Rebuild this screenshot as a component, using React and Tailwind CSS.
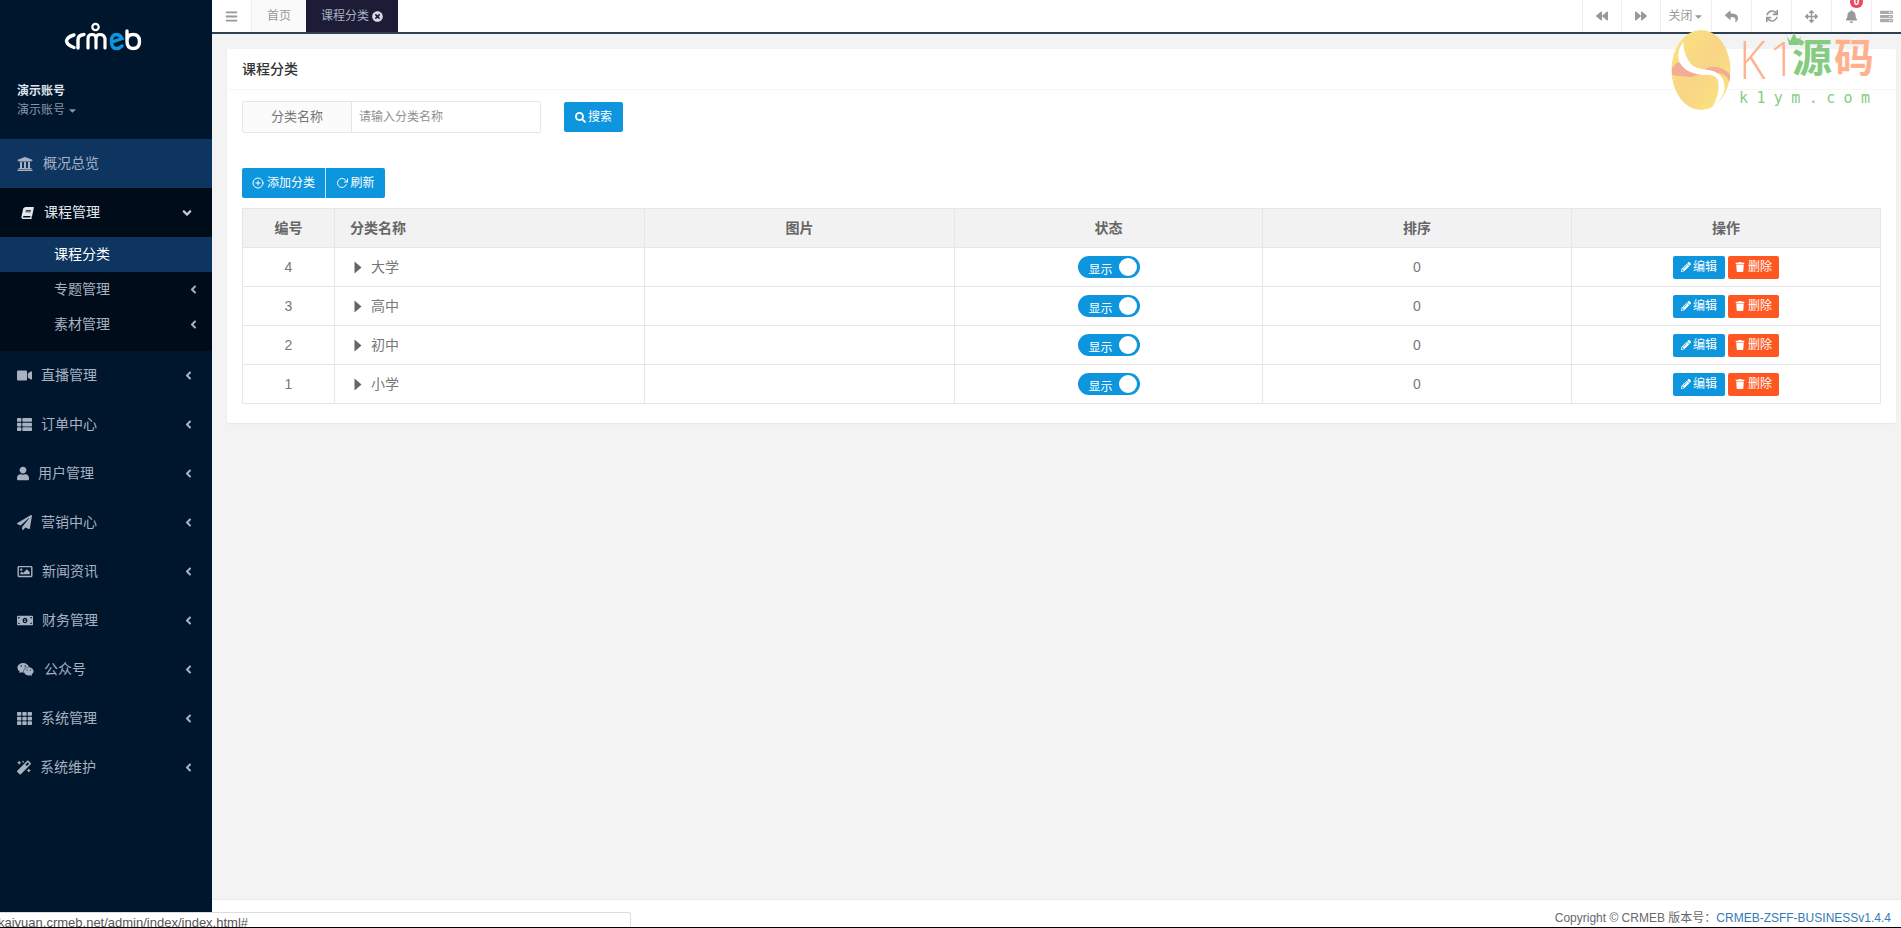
import React from "react";
import {
  FaUniversity, FaBook, FaVideo, FaThList, FaUser, FaPaperPlane, FaRegImage, FaMoneyBillAlt, FaWeixin, FaTh, FaMagic,
  FaBars, FaBackward, FaForward, FaReply, FaSync, FaArrowsAlt, FaBell, FaAngleLeft, FaAngleDown, FaCaretDown,
  FaTimesCircle, FaSearch, FaPencilAlt, FaTrash, FaServer,
} from "react-icons/fa";
import { FiPlusCircle, FiRotateCw } from "react-icons/fi";

const FONT = "font-['Liberation_Sans','Noto_Sans_CJK_SC',sans-serif]";

const navItems = [
  { icon: FaVideo, label: "直播管理", gap: "gap-[9px]", w: "w-[15px]" },
  { icon: FaThList, label: "订单中心", gap: "gap-[9px]", w: "w-[15px]" },
  { icon: FaUser, label: "用户管理", gap: "gap-[9px]", w: "w-[12px]" },
  { icon: FaPaperPlane, label: "营销中心", gap: "gap-[9px]", w: "w-[15px]" },
  { icon: FaRegImage, label: "新闻资讯", gap: "gap-[9px]", w: "w-[16px]" },
  { icon: FaMoneyBillAlt, label: "财务管理", gap: "gap-[9px]", w: "w-[16px]" },
  { icon: FaWeixin, label: "公众号", gap: "gap-[10px]", w: "w-[17px]" },
  { icon: FaTh, label: "系统管理", gap: "gap-[9px]", w: "w-[15px]" },
  { icon: FaMagic, label: "系统维护", gap: "gap-[9px]", w: "w-[14px]" },
];

const rows = [
  { id: 4, name: "大学" },
  { id: 3, name: "高中" },
  { id: 2, name: "初中" },
  { id: 1, name: "小学" },
];

function Logo() {
  return (
    <svg width="78" height="30" viewBox="0 0 78 30" fill="none" className="block">
      <path d="M10 13 Q3 15 2.500 19 Q3 23 10 25.500" stroke="#fff" strokeWidth="3.400" strokeLinecap="round" />
      <path d="M14 26 V18 Q14 13 20 12.500" stroke="#fff" strokeWidth="3.400" strokeLinecap="round" />
      <path d="M24 26 V16.500 Q24 12.500 28 12.500 Q32 12.500 32 16.500 V26 M32 16.500 Q32 12.500 36 12.500 Q40 12.500 41 16.500 V26" stroke="#fff" strokeWidth="3.200" strokeLinecap="round" />
      <circle cx="31.500" cy="5" r="3.200" stroke="#fff" strokeWidth="2.200" />
      <path d="M48 20 L58 16.500 Q56 12.500 52.500 12.500 Q47.500 12.500 47.500 19.500 Q47.500 26.500 52.500 26.500 Q55.500 26.500 58 24" stroke="#0d96dd" strokeWidth="3.400" strokeLinecap="round" />
      <path d="M63 9 V19 Q63 26.500 69 26.500 Q75.500 26.500 75.500 19.500 Q75.500 12.500 69 12.500 Q63 12.500 63 19" stroke="#fff" strokeWidth="3.400" strokeLinecap="round" />
    </svg>
  );
}

function Watermark() {
  return (
    <div className={`absolute left-[1671px] top-[30px] flex items-start pointer-events-none ${FONT}`}>
      <svg width="60" height="80" viewBox="0 0 60 80" className="block shrink-0">
        <defs>
          <linearGradient id="egg" x1="0" y1="0" x2="1" y2="1">
            <stop offset="0" stopColor="#f8e67c" />
            <stop offset="0.5" stopColor="#f9d486" />
            <stop offset="1" stopColor="#fae77c" />
          </linearGradient>
        </defs>
        <ellipse cx="30" cy="40" rx="29.500" ry="40" fill="url(#egg)" />
        <path d="M1 38 Q8 28 13 36 Q18 44 30 44 L20 47 Q6 46 1 45Z" fill="#f2a09a" opacity="0.8" />
        <path d="M32 40 Q46 32 59 44 L59 52 Q52 40 44 44 Z" fill="#f2a09a" opacity="0.8" />
        <path d="M12 12 Q3 26 11 36 Q18 44 32 45 Q44 44 47 50 Q50 62 41 78 Q56 66 53 52 Q50 42 38 40 Q24 39 20 34 Q13 26 12 12Z" fill="#fff" />
      </svg>
      <div className="flex flex-col items-start pt-[4px] ml-[8px] relative">
        <div className="flex items-center h-[48px] leading-[48px] relative">
          <span className="inline-block w-[27px] text-[54px] font-light text-[#ffb18e] font-['Open_Sans',sans-serif] origin-left scale-x-[0.85]">K</span>
          <span className="inline-block w-[26px] text-[48px] font-light text-[#ffb18e] font-['Open_Sans',sans-serif] pl-[3px]">1</span>
          <span className="text-[#85cc80] font-bold text-[40px] w-[42px]">源</span>
          <span className="text-[#ffb18e] font-bold text-[40px] w-[40px]">码</span>
          <svg width="16" height="14" viewBox="0 0 16 14" className="absolute left-[47px] -top-[2px]">
            <path d="M1 4 L4 9 L8 1 L12 9 L15 4 L13 13 H3Z" fill="#85cc80" />
          </svg>
        </div>
        <div className="mt-[7px] text-[15px] leading-[18px] tracking-[8.400px] text-[#85cc80] font-['DejaVu_Sans_Mono',monospace]">k1ym.com</div>
      </div>
    </div>
  );
}

function TopTool({ children, w = "w-[40px]" }) {
  return (
    <div className={`${w} h-full border-l border-[#eeeeee] flex items-center justify-center text-[#999999] text-[12px]`}>
      {children}
    </div>
  );
}

function Toggle() {
  return (
    <div className="w-[62px] h-[22px] rounded-full bg-[#0d96dd] ml-[15px] flex items-center justify-between pl-[11px] pr-[3px]">
      <span className="relative top-[3px] text-white text-[12px] leading-[16px]">显示</span>
      <span className="w-[18px] h-[18px] rounded-full bg-white" />
    </div>
  );
}

export default function App() {
  return (
    <div className={`relative flex w-[1901px] h-[928px] overflow-hidden bg-[#f3f3f4] ${FONT}`}>
      <aside className="w-[212px] shrink-0 h-full bg-[#00162c] flex flex-col text-[#a7b1c2] text-[14px]">
        <div className="h-[139px] shrink-0 flex flex-col">
          <div className="h-[80px] pt-[22px] pl-[64px]"><Logo /></div>
          <div className="pl-[17px] pt-[2px]">
            <div className="text-[12px] leading-[18px] font-bold text-[#dfe4ed]">演示账号</div>
            <div className="text-[12px] leading-[18px] mt-[1px] flex items-center gap-[2px] text-[#8795a8]">演示账号<FaCaretDown className="text-[11px]" /></div>
          </div>
        </div>
        <div className="h-[49px] bg-[#0e3560] flex items-center pl-[17px] gap-[10px]">
          <FaUniversity className="text-[16px] w-[16px]" />
          <span>概况总览</span>
        </div>
        <div className="bg-[#000c1a] shrink-0">
          <div className="h-[49px] flex items-center pl-[21px] pr-[18px] text-[#e4e7ee]">
            <FaBook className="text-[12px] w-[13px] mr-[10px] -skew-x-12" />
            <span>课程管理</span>
            <FaAngleDown className="ml-auto text-[14px] text-[#c5ccd8]" />
          </div>
          <div className="h-[35px] bg-[#0e3560] flex items-center pl-[54px] text-white">课程分类</div>
          <div className="h-[35px] flex items-center pl-[54px] pr-[12px]">专题管理<FaAngleLeft className="ml-auto text-[13px]" /></div>
          <div className="h-[35px] flex items-center pl-[54px] pr-[12px]">素材管理<FaAngleLeft className="ml-auto text-[13px]" /></div>
          <div className="h-[9px]" />
        </div>
        {navItems.map(({ icon: Icon, label, gap, w }) => (
          <div key={label} className={`h-[49px] shrink-0 flex items-center pl-[17px] pr-[17px] ${gap}`}>
            <Icon className={`${w} text-[15px] shrink-0`} />
            <span>{label}</span>
            <FaAngleLeft className="ml-auto text-[13px]" />
          </div>
        ))}
      </aside>

      <main className="flex-1 min-w-0 h-full flex flex-col">
        <header className="h-[34px] shrink-0 bg-white border-b-2 border-[#2f4050] flex text-[12px]">
          <div className="w-[39px] flex items-center justify-center text-[#999999]"><FaBars className="text-[13px]" /></div>
          <div className="w-[55px] border-l border-[#eeeeee] bg-[#fafafa] flex items-center justify-center text-[#999999]">首页</div>
          <div className="w-[92px] bg-[#1c1c36] flex items-center justify-center gap-[3px] text-[#a7b1c2]">课程分类<FaTimesCircle className="text-[11px] text-[#d6d9e0]" /></div>
          <div className="ml-auto flex h-full">
            <TopTool w="w-[39px]"><FaBackward className="text-[12px]" /></TopTool>
            <TopTool w="w-[39px]"><FaForward className="text-[12px]" /></TopTool>
            <TopTool w="w-[51px]"><span>关闭</span><FaCaretDown className="text-[11px]" /></TopTool>
            <TopTool><FaReply className="text-[13px]" /></TopTool>
            <TopTool><FaSync className="text-[12px]" /></TopTool>
            <TopTool><FaArrowsAlt className="text-[13px]" /></TopTool>
            <TopTool>
              <span className="relative">
                <FaBell className="text-[13px]" />
                <span className="absolute -top-[14px] -right-[5px] w-[13px] h-[12px] rounded-full bg-[#e84a5f] text-white text-[10px] leading-[12px] text-center font-bold">0</span>
              </span>
            </TopTool>
            <TopTool w="w-[30px]"><FaServer className="text-[13px] text-[#aaaaaa]" /></TopTool>
          </div>
        </header>

        <div className="flex-1 min-h-0 pt-[15px] pl-[15px] pr-[5px]">
          <section className="h-[374px] bg-white rounded-[2px] shadow-[0_1px_2px_rgba(0,0,0,0.05)] flex flex-col">
            <div className="h-[41px] shrink-0 border-b border-[#f6f6f6] flex items-center pl-[15px] text-[14px] font-medium text-[#333333]">课程分类</div>
            <div className="px-[15px] pt-[11px] flex-1 flex flex-col">
              <div className="flex items-center h-[32px]">
                <div className="w-[110px] h-[32px] border border-[#e6e6e6] bg-[#fbfbfb] rounded-l-[2px] flex items-center justify-center text-[13px] text-[#777777]">分类名称</div>
                <div className="w-[189px] h-[32px] border border-l-0 border-[#e6e6e6] rounded-r-[2px] flex items-center pl-[7px] text-[12px] text-[#8f8f8f]">请输入分类名称</div>
                <div className="ml-[23px] w-[59px] h-[30px] bg-[#0d96dd] rounded-[2px] flex items-center justify-center gap-[2px] text-[12px] text-white"><FaSearch className="text-[11px]" />搜索</div>
              </div>
              <div className="mt-[35px] flex h-[30px] w-[143px] rounded-[2px] overflow-hidden text-[12px] text-white bg-[#0d96dd]">
                <div className="w-[84px] border-r border-[#bfe3f6] flex items-center justify-center gap-[3px]"><FiPlusCircle className="text-[12px]" />添加分类</div>
                <div className="flex-1 flex items-center justify-center gap-[2px]"><FiRotateCw className="text-[12px]" />刷新</div>
              </div>
              <table className="mt-[10px] w-[1638px] border-collapse table-fixed text-[14px] text-[#777777]">
                <colgroup>
                  <col className="w-[92px]" />
                  <col className="w-[310px]" />
                  <col className="w-[310px]" />
                  <col className="w-[308px]" />
                  <col className="w-[309px]" />
                  <col className="w-[309px]" />
                </colgroup>
                <thead>
                  <tr className="h-[39px] bg-[#f2f2f2] text-[#666666]">
                    <th className="border border-[#e6e6e6] font-bold">编号</th>
                    <th className="border border-[#e6e6e6] font-bold text-left pl-[15px]">分类名称</th>
                    <th className="border border-[#e6e6e6] font-bold">图片</th>
                    <th className="border border-[#e6e6e6] font-bold">状态</th>
                    <th className="border border-[#e6e6e6] font-bold">排序</th>
                    <th className="border border-[#e6e6e6] font-bold">操作</th>
                  </tr>
                </thead>
                <tbody>
                  {rows.map((r) => (
                    <tr key={r.id} className="h-[39px]">
                      <td className="border border-[#e6e6e6] text-center">{r.id}</td>
                      <td className="border border-[#e6e6e6] pl-[19px]">
                        <div className="flex items-center gap-[9px]">
                          <svg width="8" height="13" viewBox="0 0 8 13" className="block shrink-0"><path d="M0.500 0.500 L7.500 6.500 L0.500 12.500Z" fill="#666666" /></svg>
                          {r.name}
                        </div>
                      </td>
                      <td className="border border-[#e6e6e6]" />
                      <td className="border border-[#e6e6e6]"><div className="w-[92px] mx-auto"><Toggle /></div></td>
                      <td className="border border-[#e6e6e6] text-center">0</td>
                      <td className="border border-[#e6e6e6]">
                        <div className="flex justify-center gap-[3px] text-[12px] text-white">
                          <div className="w-[52px] h-[23px] bg-[#0d96dd] rounded-[2px] flex items-center justify-center gap-[2px]"><FaPencilAlt className="text-[10px]" />编辑</div>
                          <div className="w-[51px] h-[23px] bg-[#ff5722] rounded-[2px] flex items-center justify-center gap-[3px]"><FaTrash className="text-[10px]" />删除</div>
                        </div>
                      </td>
                    </tr>
                  ))}
                </tbody>
              </table>
            </div>
          </section>
        </div>

        <footer className="h-[29px] shrink-0 bg-white border-t border-[#e7eaec] flex items-start justify-end pr-[10px] pt-[9px] text-[12px] leading-[18px] text-[#676a6c]">
          Copyright © CRMEB 版本号：<span className="text-[#337ab7]">CRMEB-ZSFF-BUSINESSv1.4.4</span>
        </footer>
      </main>

      <Watermark />

      <div className="absolute left-0 bottom-0 w-[631px] h-[16px] bg-white border-t border-r border-[#dddddd] rounded-tr-[3px] overflow-hidden whitespace-nowrap text-[13px] leading-[16px] text-[#555555]">
        <span className="block -ml-[2px] pt-[2px]">kaiyuan.crmeb.net/admin/index/index.html#</span>
      </div>
      <div className="absolute left-0 bottom-0 w-full h-px bg-black" />
    </div>
  );
}
